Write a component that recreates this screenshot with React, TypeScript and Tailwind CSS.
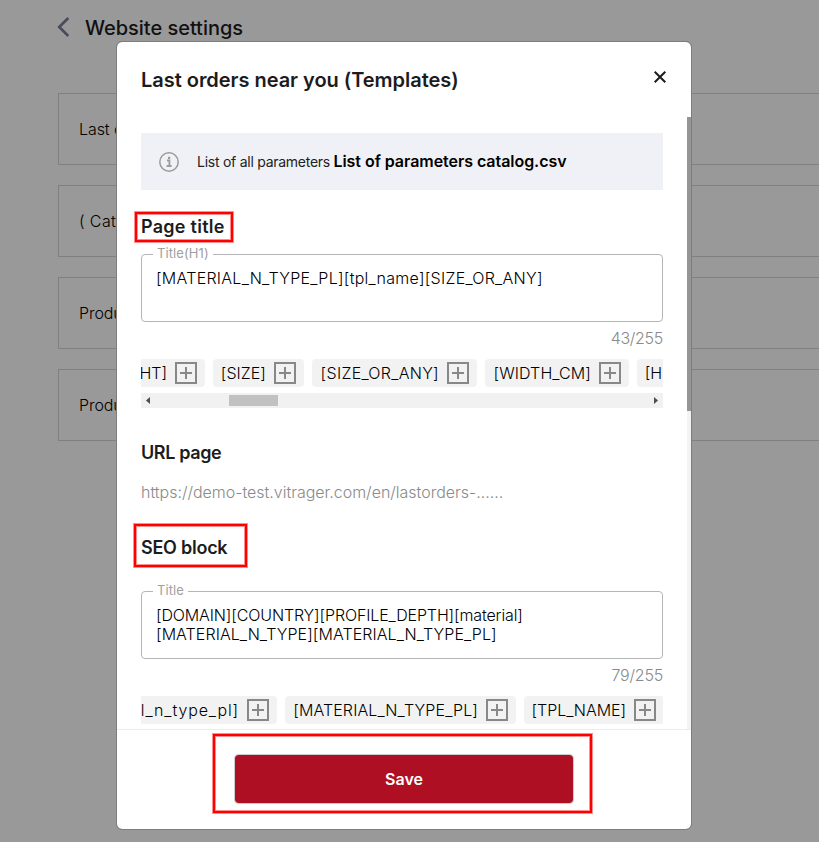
import type { ReactNode } from 'react';
import { clsx } from 'clsx';

type ChipItem = { label: string; className: string; textClass: string };

const SETTINGS = [
  { label: 'Last orders near you', className: 'tracking-[-0.08px]' },
  { label: '( Catalog ) templates', className: 'tracking-[0.4px]' },
  { label: 'Products templates', className: 'tracking-[-0.07px]' },
  { label: 'Product page', className: 'tracking-[-0.07px]' },
];

const TITLE_CHIPS: ChipItem[] = [
  { label: '[HEIGHT]', className: 'w-[98px] -ml-[34px]', textClass: 'tracking-[0px]' },
  { label: '[SIZE]', className: 'w-[91px]', textClass: 'tracking-[0.05px]' },
  { label: '[SIZE_OR_ANY]', className: 'w-[165px]', textClass: 'tracking-[0.3px]' },
  { label: '[WIDTH_CM]', className: 'w-[144px]', textClass: 'tracking-[0.12px]' },
  { label: '[HEIGHT_CM]', className: 'w-[148px]', textClass: 'tracking-[0px]' },
];

const SEO_CHIPS: ChipItem[] = [
  { label: '[material_n_type_pl]', className: 'w-[210px] -ml-[74px]', textClass: 'tracking-[0.88px]' },
  { label: '[MATERIAL_N_TYPE_PL]', className: 'w-[231px]', textClass: 'tracking-[0.12px]' },
  { label: '[TPL_NAME]', className: 'w-[140px]', textClass: 'tracking-[-0.05px]' },
];

function Highlight({ className }: { className: string }) {
  return (
    <span
      className={clsx(
        'pointer-events-none absolute z-10 border-2 border-[#ff0000] shadow-[inset_0_0_0_1px_#ff8f8f] outline outline-1 outline-[#ff8f8f]',
        className,
      )}
    />
  );
}

function PlusBox() {
  return (
    <svg width="22" height="22" viewBox="0 0 22 22" fill="none" className="shrink-0" stroke="#888888">
      <rect x="1" y="1" width="20" height="20" strokeWidth="2" />
      <path d="M11 5v12M5 11h12" strokeWidth="2" />
    </svg>
  );
}

function ChipRow({ items }: { items: ChipItem[] }) {
  return (
    <div className="flex gap-2 overflow-hidden">
      {items.map((item) => (
        <div
          key={item.label}
          className={clsx(
            'flex h-7 shrink-0 items-center justify-end gap-2 rounded bg-[#f2f2f2] pr-2 font-light whitespace-nowrap text-black',
            item.className,
          )}
        >
          <span className={item.textClass}>{item.label}</span>
          <PlusBox />
        </div>
      ))}
    </div>
  );
}

function TextArea({ label, labelClass, children }: { label: string; labelClass: string; children: ReactNode }) {
  return (
    <div className="relative h-[68px] rounded border border-[#b5b5b5] px-[14px] pt-[14px] leading-[19px] font-light whitespace-nowrap text-black">
      <span
        className={clsx(
          'absolute -top-[10px] left-[11px] bg-white px-1 text-[13px] leading-4 font-normal text-[#a0a0a0]',
          labelClass,
        )}
      >
        {label}
      </span>
      {children}
    </div>
  );
}

function HorizontalScrollbar() {
  return (
    <div className="mt-[6px] flex h-[15px] items-center bg-[#f1f1f1] px-[5px]">
      <svg width="4" height="7" viewBox="0 0 4 7" fill="#4d4d4d">
        <path d="M4 0v7L0 3.5z" />
      </svg>
      <div className="ml-[79px] h-[11px] w-[49px] bg-[#c1c1c1]" />
      <svg width="4" height="7" viewBox="0 0 4 7" fill="#4d4d4d" className="ml-auto">
        <path d="M0 0v7l4-3.5z" />
      </svg>
    </div>
  );
}

function SettingsPage() {
  return (
    <div className="h-full">
      <div className="flex h-[57px] items-center pl-[57px]">
        <svg width="13" height="20" viewBox="0 0 13 20" fill="none" stroke="#484b5c" strokeWidth="2.6" className="-mt-[3px]">
          <path d="M11.3 1L2.2 10L11.3 19" />
        </svg>
        <h1 className="-mt-[2px] ml-[15px] text-[20px] font-[450] tracking-[-0.03px] text-[#111]">Website settings</h1>
      </div>
      <div className="mt-9 ml-[58px] flex flex-col gap-5">
        {SETTINGS.map((item) => (
          <div
            key={item.label}
            className="flex h-[72px] items-center border border-r-0 border-[#808080] pl-5 font-light text-black"
          >
            <span className={item.className}>{item.label}</span>
          </div>
        ))}
      </div>
    </div>
  );
}

function TemplatesDialog() {
  return (
    <div className="absolute top-[42px] left-[117px] flex h-[787px] w-[574px] flex-col overflow-hidden rounded-[5px] bg-white outline outline-1 outline-[#7d7d7d]">
      <header className="flex h-[75px] shrink-0 items-center justify-between pr-[25px] pl-6">
        <h2 className="text-[20px] font-semibold tracking-[-0.03px]">Last orders near you (Templates)</h2>
        <svg width="12" height="12" viewBox="0 0 12 12" stroke="#1c1c1c" strokeWidth="2" className="-mt-[5px]">
          <path d="M.7.7l10.6 10.6M11.3.7L.7 11.3" />
        </svg>
      </header>

      <div className="flex h-[612px] shrink-0 overflow-hidden">
        <div className="w-[570px] shrink-0 pt-4 pr-6 pl-6">
          <div className="flex h-[57px] items-center bg-[#f0f1f6] pl-[18px]">
            <svg width="20" height="20" viewBox="0 0 20 20" fill="none" stroke="#9b9b9b">
              <circle cx="10" cy="10" r="9.2" strokeWidth="1.5" />
              <path d="M8 8.5h2.4v5.2M7.6 14h5" strokeWidth="1.8" />
              <path d="M9 5.8h2.2" strokeWidth="2.2" />
            </svg>
            <p className="-mt-[2px] ml-[18px] whitespace-nowrap text-black">
              <span className="text-sm tracking-[-0.26px] text-[#222]">List of all parameters</span>{' '}
              <b className="-ml-[1px] font-semibold tracking-[-0.05px]">List of parameters catalog.csv</b>
            </p>
          </div>

          <div className="relative mt-[23px]">
            <h3 className="text-lg leading-7 font-semibold tracking-[0.27px]">Page title</h3>
            <Highlight className="-top-[1px] -left-[6px] h-[30px] w-[98px]" />
          </div>
          <div className="mt-[13px]">
            <TextArea label="Title(H1)" labelClass="tracking-[0.1px]">
              <span className="tracking-[0.27px]">[MATERIAL_N_TYPE_PL][tpl_name][SIZE_OR_ANY]</span>
            </TextArea>
          </div>
          <p className="mt-1 h-6 text-right font-light tracking-[-0.3px] text-[#8a8a8a]">43/255</p>
          <div className="mt-[9px]">
            <ChipRow items={TITLE_CHIPS} />
            <HorizontalScrollbar />
          </div>

          <h3 className="mt-[31px] text-lg leading-7 font-semibold tracking-[-0.38px]">URL page</h3>
          <p className="mt-[13px] h-6 font-light tracking-[-0.02px] text-[#8a8a8a]">
            https://demo-test.vitrager.com/en/lastorders-......
          </p>

          <div className="relative mt-[30px]">
            <h3 className="text-lg leading-7 font-semibold tracking-[-0.25px]">SEO block</h3>
            <Highlight className="-top-[10px] -left-[7px] h-[43px] w-[113px]" />
          </div>
          <div className="mt-[29px]">
            <TextArea label="Title" labelClass="tracking-[0.1px]">
              <span className="block tracking-[-0.13px]">[DOMAIN][COUNTRY][PROFILE_DEPTH][material]</span>
              <span className="block tracking-[0.07px]">[MATERIAL_N_TYPE][MATERIAL_N_TYPE_PL]</span>
            </TextArea>
          </div>
          <p className="mt-1 h-6 text-right font-light tracking-[-0.2px] text-[#8a8a8a]">79/255</p>
          <div className="mt-[9px]">
            <ChipRow items={SEO_CHIPS} />
          </div>
        </div>
        <div className="w-1 shrink-0 bg-[#f3f3f3]">
          <div className="h-[294px] bg-[#959595]" />
        </div>
      </div>

      <footer className="relative flex flex-1 justify-center border-t border-[#ececec] pt-[25px]">
        <button className="h-[48px] w-[338px] rounded-[3px] bg-[#af0f22] font-semibold text-white outline outline-1 outline-[#ccc]">
          Save
        </button>
        <Highlight className="top-[4px] left-[96px] h-[79px] w-[379px]" />
      </footer>
    </div>
  );
}

export default function App() {
  return (
    <div className="relative h-[842px] w-[819px] overflow-hidden bg-[#999999] font-['Inter',sans-serif] text-base text-[#1c1c1c]">
      <SettingsPage />
      <TemplatesDialog />
    </div>
  );
}
